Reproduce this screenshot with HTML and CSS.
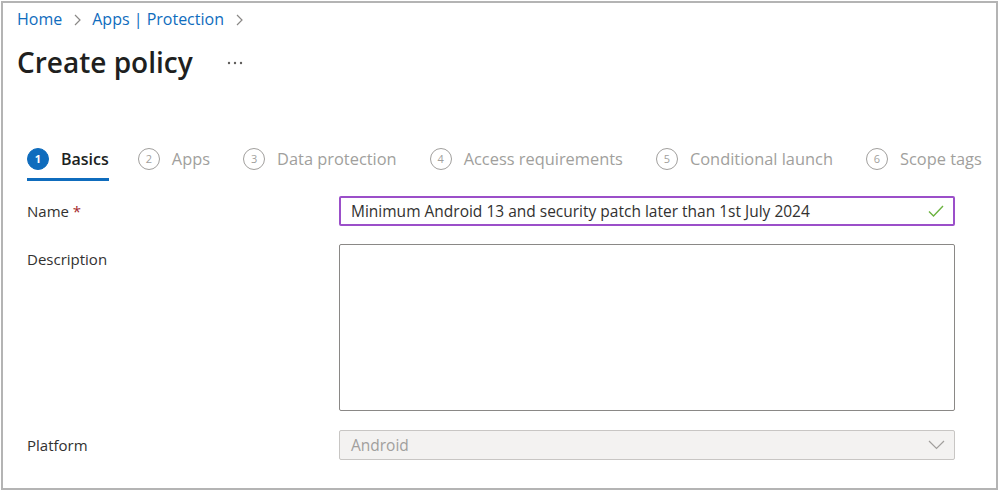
FILE: index.html
```html
<!DOCTYPE html>
<html lang="en">
<head>
    <meta charset="UTF-8">
    <title>Create policy</title>
    <link rel="stylesheet" href="styles.css">
</head>
<body>
<div class="frame">
    <div class="crumbs">
        <a href="#">Home</a>
        <svg class="sep" width="7" height="12" viewBox="0 0 7 12"><path d="M1 1 L6 6 L1 11"/></svg>
        <a href="#">Apps | Protection</a>
        <svg class="sep" width="7" height="12" viewBox="0 0 7 12"><path d="M1 1 L6 6 L1 11"/></svg>
    </div>
    <div class="title">
        <h1>Create policy</h1>
        <svg class="more" width="16" height="4" viewBox="0 0 16 4"><circle cx="2" cy="2" r="1.2"/><circle cx="8" cy="2" r="1.2"/><circle cx="14" cy="2" r="1.2"/></svg>
    </div>

    <ul class="steps">
        <li class="active"><span class="num">1</span>Basics</li>
        <li><span class="num">2</span>Apps</li>
        <li><span class="num">3</span>Data protection</li>
        <li><span class="num">4</span>Access requirements</li>
        <li><span class="num">5</span>Conditional launch</li>
        <li><span class="num">6</span>Scope tags</li>
    </ul>

    <div class="form">
        <div class="row">
            <label>Name <span class="req">*</span></label>
            <div class="field name">
                <span>Minimum Android 13 and security patch later than 1st July 2024</span>
                <svg width="16" height="12" viewBox="0 0 16 12"><path d="M1 6.5 L5.5 11 L15 1" fill="none" stroke="#6bb33f" stroke-width="1.4"/></svg>
            </div>
        </div>
        <div class="row top">
            <label>Description</label>
            <div class="field area"></div>
        </div>
        <div class="row">
            <label>Platform</label>
            <div class="field select">
                <span>Android</span>
                <svg width="17" height="10" viewBox="0 0 17 10"><path d="M1 1 L8.5 8.5 L16 1" fill="none" stroke="#a19f9d" stroke-width="1.2"/></svg>
            </div>
        </div>
    </div>
</div>
</body>
</html>
```

FILE: styles.css
```css
*{
    margin: 0;
    padding: 0;
    box-sizing: border-box;
}
ul{
    list-style: none;
}
body{
    font-family: "Segoe UI", "Open Sans", sans-serif;
    color: #323130;
    background: #fff;
}
.frame{
    margin: 1px;
    height: 489px;
    border: 2px solid #b4b4b4;
}
/* 顶部 */
.crumbs{
    display: flex;
    align-items: center;
    gap: 11px;
    margin: 5px 0 0 14px;
    height: 22px;
    font-size: 16px;
}
.crumbs a{
    color: #0f6cbd;
    text-decoration: none;
}
.crumbs a + .sep{
    margin-left: 1px;
}
.crumbs .sep{
    fill: none;
    stroke: #8a8886;
    stroke-width: 1.2;
    margin-top: 1px;
}
.title{
    display: flex;
    align-items: center;
    gap: 34px;
    margin: 12px 0 0 14px;
    height: 40px;
}
.title h1{
    font-size: 28px;
    font-weight: 600;
    color: #201f1e;
}
.more{
    fill: #605e5c;
    margin-top: 2px;
}
/* 步骤 */
.steps{
    display: flex;
    gap: 33px;
    margin: 66px 0 0 24px;
    font-size: 16.4px;
    color: #a19f9d;
}
.steps li{
    display: flex;
    align-items: center;
    gap: 12px;
    height: 33px;
    padding-bottom: 8px;
    border-bottom: 3px solid transparent;
    line-height: 22px;
}
.steps .num{
    width: 22px;
    height: 22px;
    border: 1px solid #a19f9d;
    border-radius: 50%;
    font-size: 11px;
    line-height: 20px;
    text-align: center;
}
.steps li.active{
    color: #201f1e;
    font-weight: 600;
    font-size: 16px;
    margin-right: -4px;
    border-bottom-color: #0f6cbd;
}
.steps li.active .num{
    background: #0f6cbd;
    border-color: #0f6cbd;
    color: #fff;
    font-weight: 700;
}
/* 表单 */
.form{
    display: flex;
    flex-direction: column;
    gap: 18px;
    margin: 15px 0 0 24px;
}
.row{
    display: flex;
    align-items: center;
}
.row.top{
    align-items: flex-start;
}
.row label{
    width: 312px;
    font-size: 15px;
    line-height: 30px;
}
.req{
    color: #a4262c;
}
.field{
    width: 616px;
    height: 30px;
    border: 1px solid #8a8886;
    border-radius: 2px;
    display: flex;
    align-items: center;
    justify-content: space-between;
    padding: 0 9px 0 11px;
    font-size: 15.5px;
}
.field.name{
    border: 2px solid #9b4fc9;
    padding-left: 10px;
}
.field.area{
    height: 167px;
}
.field.select{
    background: #f3f2f1;
    border-color: #c8c6c4;
    color: #a19f9d;
}
.row + .row.top + .row{
    margin-top: 1px;
}
```
